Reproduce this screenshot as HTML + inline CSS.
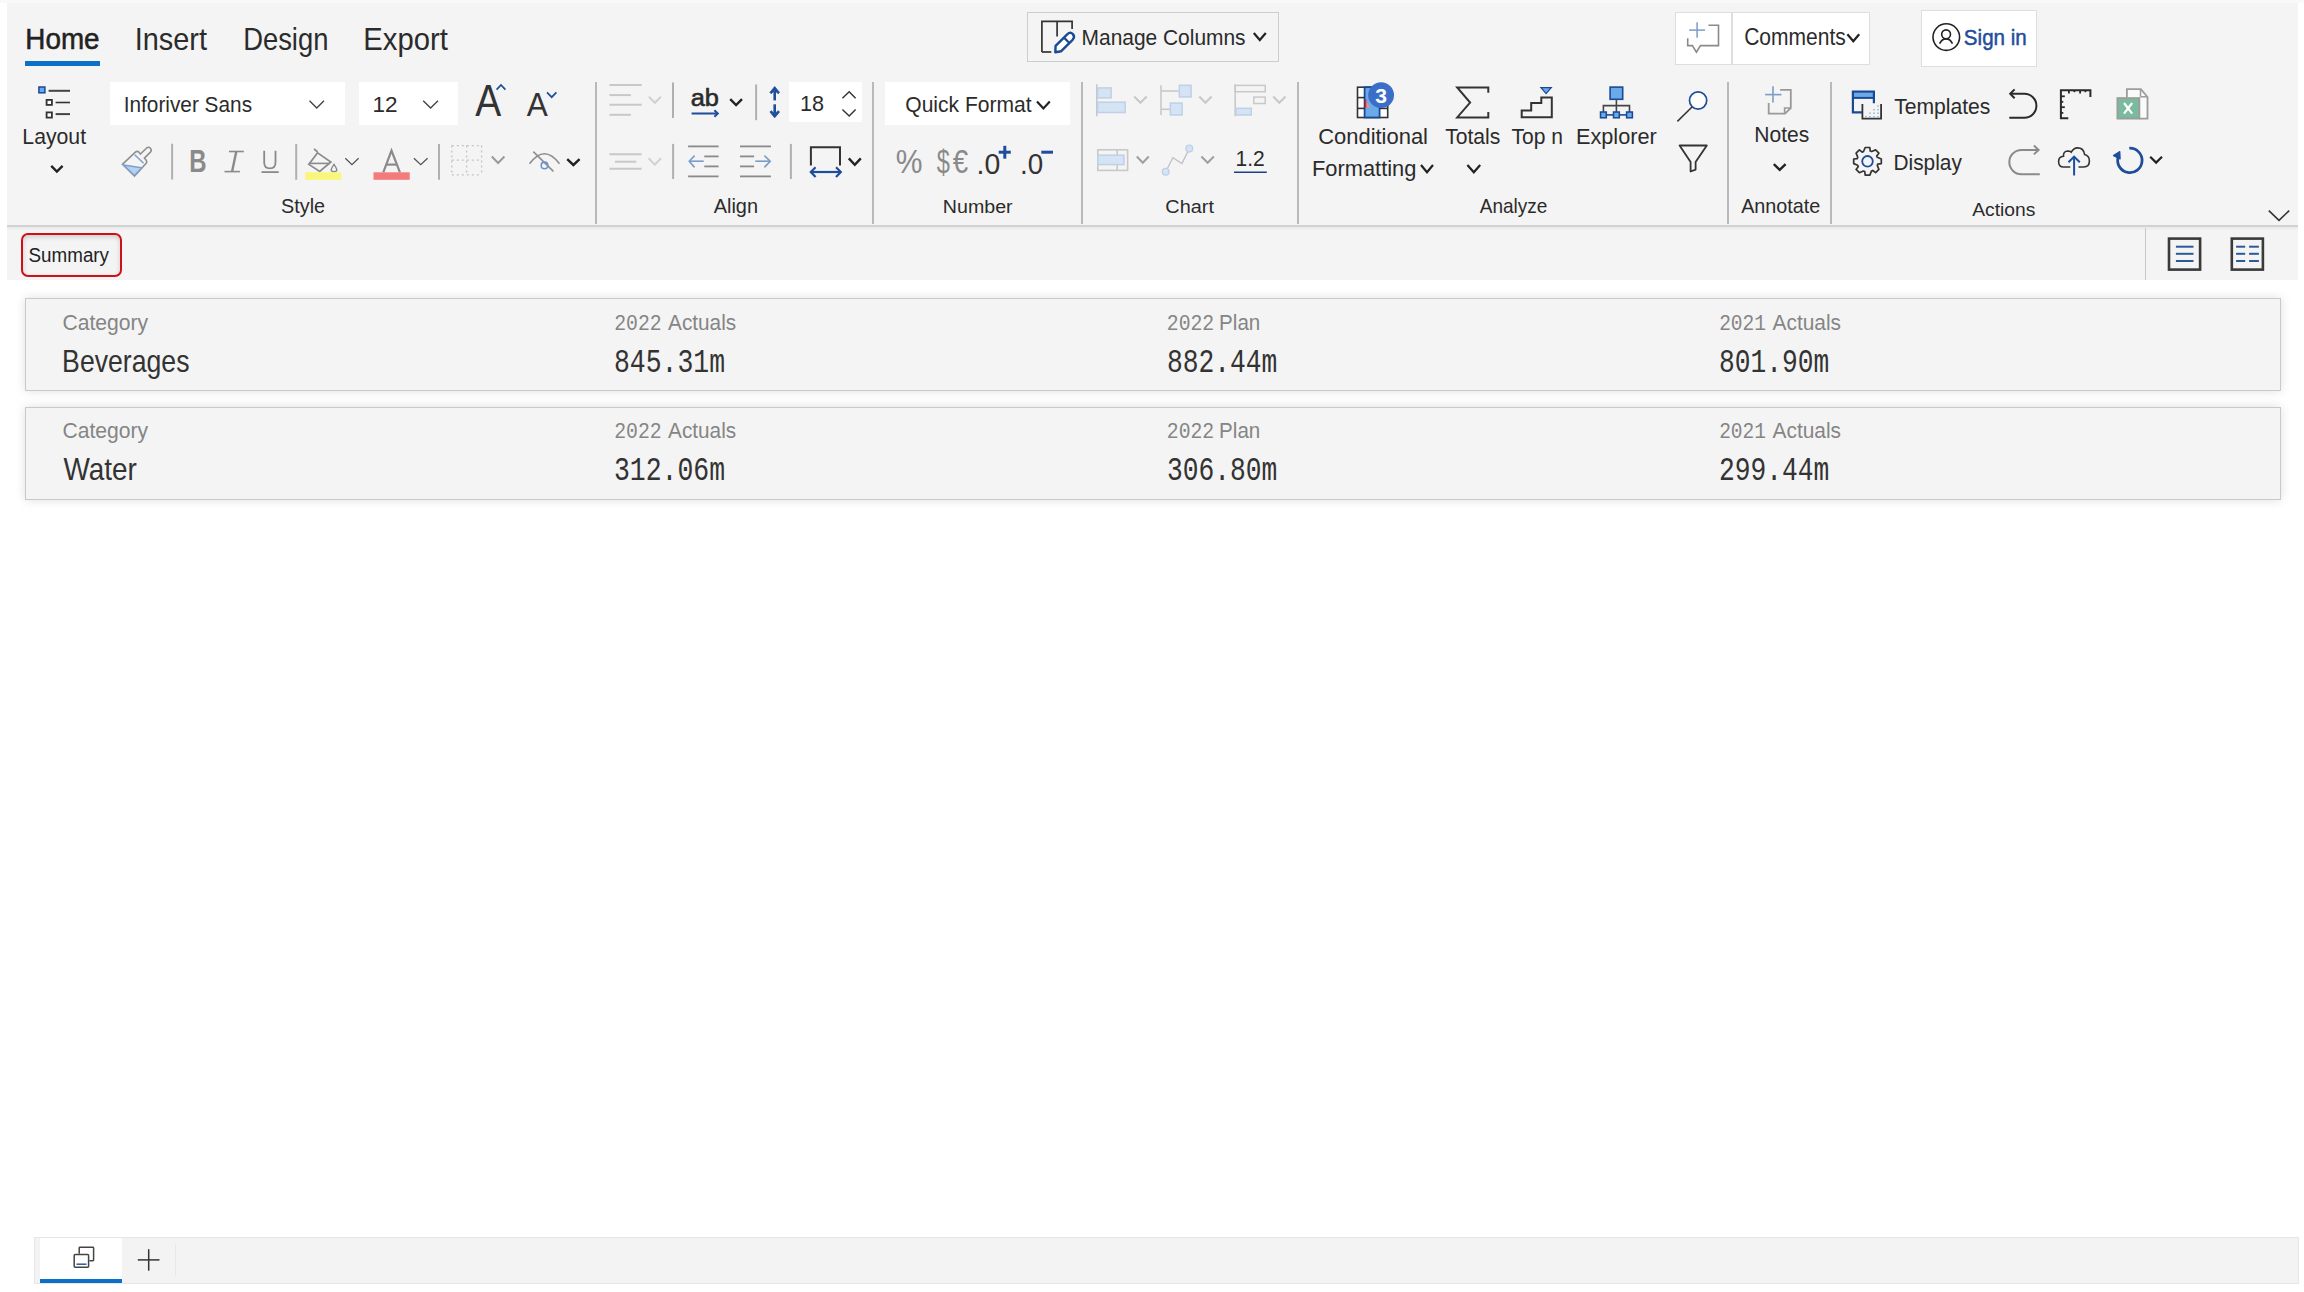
<!DOCTYPE html>
<html><head><meta charset="utf-8"><title>Inforiver</title>
<style>
html,body{margin:0;padding:0;width:2304px;height:1292px;overflow:hidden;background:#fff;font-family:"Liberation Sans",sans-serif}
.a{position:absolute}
svg{position:absolute;left:0;top:0}
</style></head><body>
<div class="a" style="left:0px;top:0px;width:2304px;height:3px;background:#f9f9f9"></div>
<div class="a" style="left:7px;top:3px;width:2291px;height:223px;background:#f4f4f4"></div>
<div class="a" style="left:7px;top:225px;width:2291px;height:2px;background:#d2d2d2"></div>
<div class="a" style="left:7px;top:227px;width:2291px;height:53px;background:#f4f4f4"></div>
<div class="a" style="left:7px;top:227px;width:2291px;height:4px;background:linear-gradient(#e9e9e9,#f4f4f4)"></div>
<div class="a" style="left:110px;top:82px;width:235px;height:43px;background:#fff"></div>
<div class="a" style="left:359px;top:82px;width:99px;height:43px;background:#fff"></div>
<div class="a" style="left:789px;top:82px;width:73px;height:40px;background:#fff"></div>
<div class="a" style="left:885px;top:82px;width:185px;height:43px;background:#fff"></div>
<div class="a" style="left:1027px;top:12px;width:252px;height:50px;box-sizing:border-box;border:1.5px solid #cdcdcd"></div>
<div class="a" style="left:1675px;top:12px;width:195px;height:53px;box-sizing:border-box;border:1.5px solid #dedede;background:#fff"></div>
<div class="a" style="left:1731px;top:13px;width:1.5px;height:51px;background:#dedede"></div>
<div class="a" style="left:1921px;top:10px;width:116px;height:57px;box-sizing:border-box;border:1.5px solid #dedede;background:#fff"></div>
<div class="a" style="left:595px;top:82px;width:2px;height:142px;background:#b9b9b9"></div>
<div class="a" style="left:872px;top:82px;width:2px;height:142px;background:#b9b9b9"></div>
<div class="a" style="left:1081px;top:82px;width:2px;height:142px;background:#b9b9b9"></div>
<div class="a" style="left:1297px;top:82px;width:2px;height:142px;background:#b9b9b9"></div>
<div class="a" style="left:1727px;top:82px;width:2px;height:142px;background:#b9b9b9"></div>
<div class="a" style="left:1830px;top:82px;width:2px;height:142px;background:#b9b9b9"></div>
<div class="a" style="left:21px;top:233px;width:101px;height:44px;box-sizing:border-box;border:2.8px solid #cc1119;border-radius:7px;box-shadow:inset 0 2px 5px rgba(0,0,0,.16)"></div>
<div class="a" style="left:2145px;top:228px;width:1px;height:52px;background:#c8c8c8"></div>
<div class="a" style="left:25px;top:298px;width:2256px;height:93px;box-sizing:border-box;border:1px solid #c9c9c9;background:#f4f4f4;box-shadow:0 0 10px rgba(0,0,0,.13)"></div>
<div class="a" style="left:25px;top:407px;width:2256px;height:93px;box-sizing:border-box;border:1px solid #c9c9c9;background:#f4f4f4;box-shadow:0 0 10px rgba(0,0,0,.13)"></div>
<div class="a" style="left:34px;top:1237px;width:2265px;height:47px;box-sizing:border-box;border:1.5px solid #e6e6e6;background:#f3f3f3"></div>
<div class="a" style="left:40px;top:1238px;width:82px;height:45px;background:#fff"></div>
<div class="a" style="left:40px;top:1279px;width:82px;height:4px;background:#0a70c8"></div>
<div class="a" style="left:175px;top:1244px;width:1px;height:32px;background:#e8e8e8"></div>
<div class="a" style="left:25px;top:60.5px;width:75px;height:5.0px;background:#0a70c8"></div>
<svg width="2304" height="1292" viewBox="0 0 2304 1292">
<g id="icons">
<rect x="38.90" y="87.00" width="6.00" height="5.80" rx="0" fill="#6aaae8" stroke="#1a4a94" stroke-width="1.5"/>
<line x1="48.60" y1="90.80" x2="70.00" y2="90.80" stroke="#444" stroke-width="2" stroke-linecap="butt"/>
<rect x="46.60" y="99.90" width="5.30" height="5.00" rx="0" fill="#fff" stroke="#333" stroke-width="1.8"/>
<line x1="55.60" y1="102.50" x2="70.00" y2="102.50" stroke="#333" stroke-width="1.6" stroke-linecap="butt"/>
<rect x="46.60" y="112.40" width="5.30" height="5.20" rx="0" fill="#fff" stroke="#333" stroke-width="1.8"/>
<line x1="55.60" y1="114.10" x2="70.00" y2="114.10" stroke="#444" stroke-width="2" stroke-linecap="butt"/>
<polyline points="51.20,165.80 56.90,171.60 62.60,165.80" fill="none" stroke="#222" stroke-width="2.4" stroke-linecap="butt" stroke-linejoin="miter" />
<polyline points="309.50,100.80 316.75,108.00 324.00,100.80" fill="none" stroke="#444" stroke-width="1.4" stroke-linecap="butt" stroke-linejoin="miter" />
<polyline points="423.20,100.80 430.60,108.00 438.00,100.80" fill="none" stroke="#444" stroke-width="1.4" stroke-linecap="butt" stroke-linejoin="miter" />
<polyline points="496.60,89.60 501.00,85.00 505.40,89.60" fill="none" stroke="#1e4d9c" stroke-width="1.7" stroke-linecap="butt" stroke-linejoin="miter" />
<polyline points="547.00,92.30 551.70,97.20 556.40,92.30" fill="none" stroke="#1e4d9c" stroke-width="1.7" stroke-linecap="butt" stroke-linejoin="miter" />
<path d="M122.6,164.2 L135.4,152.2 Q137.2,150.6 139.0,152.2 L140.4,154.1 L146.6,148.0 Q148.9,146.4 150.6,148.4 Q152.0,150.3 150.4,152.1 L144.4,158.1 L146.2,160.2 Q147.3,161.8 146.2,163.2 L134.5,176.0 Z" fill="#f4f4f4" stroke="#8f8f8f" stroke-width="1.6" />
<path d="M123.4,165.0 L141.8,167.8 L134.5,175.6 Z" fill="#b3d2f2" stroke="#7f9fc8" stroke-width="1.4" />
<line x1="134.70" y1="154.80" x2="143.60" y2="163.30" stroke="#7f9fc8" stroke-width="1.5" stroke-linecap="butt"/>
<line x1="172.10" y1="143.70" x2="172.10" y2="179.50" stroke="#b0b0b0" stroke-width="2" stroke-linecap="butt"/>
<line x1="296.20" y1="143.90" x2="296.20" y2="179.80" stroke="#b0b0b0" stroke-width="2" stroke-linecap="butt"/>
<line x1="439.00" y1="143.90" x2="439.00" y2="179.80" stroke="#b0b0b0" stroke-width="2" stroke-linecap="butt"/>
<line x1="673.10" y1="143.90" x2="673.10" y2="179.00" stroke="#b0b0b0" stroke-width="2" stroke-linecap="butt"/>
<line x1="790.90" y1="143.90" x2="790.90" y2="179.00" stroke="#b0b0b0" stroke-width="2" stroke-linecap="butt"/>
<line x1="673.00" y1="82.60" x2="673.00" y2="118.00" stroke="#b0b0b0" stroke-width="2" stroke-linecap="butt"/>
<line x1="756.10" y1="84.50" x2="756.10" y2="120.20" stroke="#b0b0b0" stroke-width="2" stroke-linecap="butt"/>
<line x1="229.00" y1="151.50" x2="243.80" y2="151.50" stroke="#8a8a8a" stroke-width="1.6" stroke-linecap="butt"/>
<line x1="224.50" y1="171.60" x2="239.90" y2="171.60" stroke="#8a8a8a" stroke-width="1.6" stroke-linecap="butt"/>
<line x1="236.30" y1="151.50" x2="232.10" y2="171.60" stroke="#8a8a8a" stroke-width="2.4" stroke-linecap="butt"/>
<path d="M264.2,150.7 V162.5 Q264.2,168.4 269.85,168.4 Q275.5,168.4 275.5,162.5 V150.7" fill="none" stroke="#8a8a8a" stroke-width="1.8" />
<line x1="261.50" y1="172.10" x2="278.70" y2="172.10" stroke="#8a8a8a" stroke-width="1.8" stroke-linecap="butt"/>
<path d="M317.6,152.8 L308.8,164.4 L319.7,171.4 L330.9,162.0 Z" fill="none" stroke="#8a8a8a" stroke-width="1.7" />
<line x1="314.00" y1="148.80" x2="317.60" y2="152.00" stroke="#8a8a8a" stroke-width="1.7" stroke-linecap="butt"/>
<line x1="309.00" y1="163.40" x2="329.50" y2="163.40" stroke="#8a8a8a" stroke-width="1.6" stroke-linecap="butt"/>
<path d="M334.0,164.3 Q331.2,168.5 331.2,169.8 Q331.2,171.8 334.0,171.8 Q336.8,171.8 336.8,169.8 Q336.8,168.5 334.0,164.3 Z" fill="none" stroke="#8a8a8a" stroke-width="1.4" />
<rect x="305.20" y="172.30" width="36.10" height="7.50" rx="0" fill="#f8f77a" stroke="none" stroke-width="0"/>
<polyline points="345.30,158.20 351.95,164.60 358.60,158.20" fill="none" stroke="#555" stroke-width="1.3" stroke-linecap="butt" stroke-linejoin="miter" />
<polyline points="383.30,172.30 391.50,150.60 399.90,172.30" fill="none" stroke="#8a8a8a" stroke-width="2.2" stroke-linecap="butt" stroke-linejoin="miter" />
<line x1="386.20" y1="164.60" x2="396.80" y2="164.60" stroke="#8a8a8a" stroke-width="2.2" stroke-linecap="butt"/>
<rect x="373.50" y="172.30" width="36.20" height="7.50" rx="0" fill="#f47b7b" stroke="none" stroke-width="0"/>
<polyline points="413.90,158.20 420.75,164.60 427.60,158.20" fill="none" stroke="#555" stroke-width="1.3" stroke-linecap="butt" stroke-linejoin="miter" />
<line x1="451.8" y1="145.6" x2="481.6" y2="145.6" stroke="#c4c4c4" stroke-width="1.3" stroke-dasharray="2,3"/>
<line x1="451.8" y1="174.8" x2="481.6" y2="174.8" stroke="#c4c4c4" stroke-width="1.3" stroke-dasharray="2,3"/>
<line x1="451.8" y1="145.6" x2="451.8" y2="174.8" stroke="#c4c4c4" stroke-width="1.3" stroke-dasharray="2,3"/>
<line x1="481.6" y1="145.6" x2="481.6" y2="174.8" stroke="#c4c4c4" stroke-width="1.3" stroke-dasharray="2,3"/>
<line x1="466.6" y1="145.6" x2="466.6" y2="174.8" stroke="#c4c4c4" stroke-width="1.3" stroke-dasharray="2,3"/>
<line x1="451.8" y1="160.2" x2="481.6" y2="160.2" stroke="#c4c4c4" stroke-width="1.3" stroke-dasharray="2,3"/>
<polyline points="491.80,156.50 498.10,163.00 504.40,156.50" fill="none" stroke="#9a9a9a" stroke-width="2.0" stroke-linecap="butt" stroke-linejoin="miter" />
<path d="M529.5,163.8 Q544.5,143.6 559.5,163.8" fill="none" stroke="#8e8e8e" stroke-width="1.6" />
<line x1="533.30" y1="151.60" x2="553.40" y2="171.40" stroke="#8e8e8e" stroke-width="1.6" stroke-linecap="butt"/>
<circle cx="544.5" cy="165.4" r="3.3" fill="none" stroke="#6d95cc" stroke-width="1.6"/>
<polyline points="567.20,159.20 573.40,165.00 579.60,159.20" fill="none" stroke="#222" stroke-width="2.4" stroke-linecap="butt" stroke-linejoin="miter" />
<line x1="609.40" y1="85.00" x2="641.70" y2="85.00" stroke="#c8c8c8" stroke-width="2" stroke-linecap="butt"/>
<line x1="609.40" y1="95.10" x2="630.90" y2="95.10" stroke="#c8c8c8" stroke-width="2" stroke-linecap="butt"/>
<line x1="609.40" y1="104.80" x2="641.70" y2="104.80" stroke="#c8c8c8" stroke-width="2" stroke-linecap="butt"/>
<line x1="609.40" y1="114.80" x2="630.90" y2="114.80" stroke="#c8c8c8" stroke-width="2" stroke-linecap="butt"/>
<polyline points="648.80,96.60 654.90,102.80 661.00,96.60" fill="none" stroke="#d0d0d0" stroke-width="2" stroke-linecap="butt" stroke-linejoin="miter" />
<line x1="691.60" y1="113.50" x2="716.50" y2="113.50" stroke="#1e4d9c" stroke-width="2" stroke-linecap="butt"/>
<polyline points="714.40,110.20 717.80,113.50 714.40,116.80" fill="none" stroke="#1e4d9c" stroke-width="2" stroke-linecap="butt" stroke-linejoin="miter" />
<polyline points="730.20,99.20 736.10,105.00 742.00,99.20" fill="none" stroke="#222" stroke-width="2.4" stroke-linecap="butt" stroke-linejoin="miter" />
<line x1="774.70" y1="91.00" x2="774.70" y2="100.40" stroke="#1e4d9c" stroke-width="2.6" stroke-linecap="butt"/>
<line x1="774.70" y1="104.30" x2="774.70" y2="113.50" stroke="#1e4d9c" stroke-width="2.6" stroke-linecap="butt"/>
<path d="M769.9,92.4 L774.7,86.6 L779.5,92.4 L778.2,93.7 L774.7,90.6 L771.2,93.7 Z" fill="#1e4d9c" stroke="#1e4d9c" stroke-width="0.8" />
<path d="M769.9,112.0 L774.7,117.8 L779.5,112.0 L778.2,110.7 L774.7,113.8 L771.2,110.7 Z" fill="#1e4d9c" stroke="#1e4d9c" stroke-width="0.8" />
<polyline points="842.40,98.20 849.20,91.70 855.60,98.20" fill="none" stroke="#333" stroke-width="1.4" stroke-linecap="butt" stroke-linejoin="miter" />
<polyline points="842.40,109.60 849.20,116.10 855.60,109.60" fill="none" stroke="#333" stroke-width="1.4" stroke-linecap="butt" stroke-linejoin="miter" />
<line x1="609.40" y1="154.20" x2="641.60" y2="154.20" stroke="#c8c8c8" stroke-width="2" stroke-linecap="butt"/>
<line x1="615.00" y1="161.70" x2="636.30" y2="161.70" stroke="#c8c8c8" stroke-width="2" stroke-linecap="butt"/>
<line x1="609.40" y1="168.70" x2="641.60" y2="168.70" stroke="#c8c8c8" stroke-width="2" stroke-linecap="butt"/>
<polyline points="648.60,158.30 654.80,164.60 661.00,158.30" fill="none" stroke="#d0d0d0" stroke-width="2" stroke-linecap="butt" stroke-linejoin="miter" />
<line x1="688.10" y1="146.40" x2="718.60" y2="146.40" stroke="#8a8a8a" stroke-width="1.8" stroke-linecap="butt"/>
<line x1="740.00" y1="146.40" x2="770.90" y2="146.40" stroke="#8a8a8a" stroke-width="1.8" stroke-linecap="butt"/>
<line x1="688.10" y1="176.40" x2="718.60" y2="176.40" stroke="#8a8a8a" stroke-width="1.8" stroke-linecap="butt"/>
<line x1="740.00" y1="176.40" x2="770.90" y2="176.40" stroke="#8a8a8a" stroke-width="1.8" stroke-linecap="butt"/>
<line x1="704.30" y1="156.40" x2="718.60" y2="156.40" stroke="#8a8a8a" stroke-width="1.8" stroke-linecap="butt"/>
<line x1="740.00" y1="156.40" x2="754.10" y2="156.40" stroke="#8a8a8a" stroke-width="1.8" stroke-linecap="butt"/>
<line x1="704.30" y1="166.40" x2="718.60" y2="166.40" stroke="#8a8a8a" stroke-width="1.8" stroke-linecap="butt"/>
<line x1="740.00" y1="166.40" x2="754.10" y2="166.40" stroke="#8a8a8a" stroke-width="1.8" stroke-linecap="butt"/>
<line x1="689.50" y1="161.20" x2="703.70" y2="161.20" stroke="#7a9ccb" stroke-width="1.6" stroke-linecap="butt"/>
<polyline points="694.60,155.60 689.20,161.20 694.60,167.40" fill="none" stroke="#7a9ccb" stroke-width="1.6" stroke-linecap="butt" stroke-linejoin="miter" />
<line x1="755.30" y1="161.20" x2="770.00" y2="161.20" stroke="#7a9ccb" stroke-width="1.6" stroke-linecap="butt"/>
<polyline points="764.40,155.60 770.20,161.20 764.40,167.40" fill="none" stroke="#7a9ccb" stroke-width="1.6" stroke-linecap="butt" stroke-linejoin="miter" />
<polyline points="810.90,165.50 810.90,147.20 840.00,147.20 840.00,165.50" fill="none" stroke="#333" stroke-width="2" stroke-linecap="butt" stroke-linejoin="miter" />
<line x1="811.50" y1="172.00" x2="840.30" y2="172.00" stroke="#1e4d9c" stroke-width="2.2" stroke-linecap="butt"/>
<polyline points="815.60,167.30 810.80,172.00 815.60,176.90" fill="none" stroke="#1e4d9c" stroke-width="2.2" stroke-linecap="butt" stroke-linejoin="miter" />
<polyline points="836.00,167.30 840.80,172.00 836.00,176.90" fill="none" stroke="#1e4d9c" stroke-width="2.2" stroke-linecap="butt" stroke-linejoin="miter" />
<polyline points="848.80,158.40 854.80,164.80 860.80,158.40" fill="none" stroke="#222" stroke-width="2.4" stroke-linecap="butt" stroke-linejoin="miter" />
<line x1="998.70" y1="152.20" x2="1010.80" y2="152.20" stroke="#1e4d9c" stroke-width="3" stroke-linecap="butt"/>
<line x1="1004.80" y1="145.80" x2="1004.80" y2="158.70" stroke="#1e4d9c" stroke-width="3" stroke-linecap="butt"/>
<line x1="1041.30" y1="152.20" x2="1053.00" y2="152.20" stroke="#1e4d9c" stroke-width="3" stroke-linecap="butt"/>
<line x1="1096.80" y1="84.30" x2="1096.80" y2="116.20" stroke="#c8c8c8" stroke-width="1.6" stroke-linecap="butt"/>
<rect x="1097.60" y="87.90" width="13.50" height="10.00" rx="0" fill="#d4e4f4" stroke="#bfd0e6" stroke-width="1.5"/>
<rect x="1097.60" y="102.20" width="27.60" height="10.30" rx="0" fill="#d4e4f4" stroke="#bfd0e6" stroke-width="1.5"/>
<polyline points="1134.20,96.50 1140.45,102.80 1146.70,96.50" fill="none" stroke="#c8c8c8" stroke-width="2" stroke-linecap="butt" stroke-linejoin="miter" />
<line x1="1161.00" y1="85.20" x2="1161.00" y2="115.00" stroke="#c8c8c8" stroke-width="1.6" stroke-linecap="butt"/>
<line x1="1161.00" y1="91.00" x2="1178.60" y2="91.00" stroke="#c8c8c8" stroke-width="1.6" stroke-linecap="butt"/>
<line x1="1161.00" y1="109.30" x2="1169.60" y2="109.30" stroke="#c8c8c8" stroke-width="1.6" stroke-linecap="butt"/>
<rect x="1179.30" y="85.30" width="11.80" height="11.60" rx="0" fill="#d4e4f4" stroke="#bfd0e6" stroke-width="1.5"/>
<rect x="1170.30" y="103.10" width="11.80" height="11.90" rx="0" fill="#d4e4f4" stroke="#bfd0e6" stroke-width="1.5"/>
<polyline points="1199.30,96.50 1205.45,102.80 1211.60,96.50" fill="none" stroke="#c8c8c8" stroke-width="2" stroke-linecap="butt" stroke-linejoin="miter" />
<line x1="1235.20" y1="84.30" x2="1235.20" y2="116.20" stroke="#c8c8c8" stroke-width="1.6" stroke-linecap="butt"/>
<rect x="1235.20" y="85.40" width="30.00" height="6.30" rx="0" fill="none" stroke="#c8c8c8" stroke-width="1.5"/>
<rect x="1253.80" y="97.10" width="11.40" height="6.40" rx="0" fill="none" stroke="#c8c8c8" stroke-width="1.5"/>
<rect x="1235.90" y="108.30" width="15.40" height="6.70" rx="0" fill="#d4e4f4" stroke="#bfd0e6" stroke-width="1.5"/>
<polyline points="1273.20,96.50 1279.35,102.80 1285.50,96.50" fill="none" stroke="#c8c8c8" stroke-width="2" stroke-linecap="butt" stroke-linejoin="miter" />
<rect x="1097.80" y="149.80" width="29.80" height="20.60" rx="0" fill="none" stroke="#c8c8c8" stroke-width="1.6"/>
<line x1="1117.20" y1="149.80" x2="1117.20" y2="170.40" stroke="#c8c8c8" stroke-width="1.6" stroke-linecap="butt"/>
<rect x="1097.80" y="155.20" width="26.20" height="9.40" rx="0" fill="#d4e4f4" stroke="#bfd0e6" stroke-width="1.5"/>
<polyline points="1136.80,156.50 1142.80,162.80 1148.80,156.50" fill="none" stroke="#a0a0a0" stroke-width="2" stroke-linecap="butt" stroke-linejoin="miter" />
<polyline points="1165.70,171.70 1172.90,157.60 1181.90,163.60 1189.30,148.60" fill="none" stroke="#c0c0c0" stroke-width="1.3" stroke-linecap="butt" stroke-linejoin="miter" />
<circle cx="1165.7" cy="171.7" r="3.4" fill="#d4e4f4" stroke="#bfd0e6" stroke-width="1.3"/>
<circle cx="1189.3" cy="148.6" r="3.4" fill="#d4e4f4" stroke="#bfd0e6" stroke-width="1.3"/>
<polyline points="1201.40,156.50 1207.65,162.80 1213.90,156.50" fill="none" stroke="#a0a0a0" stroke-width="2" stroke-linecap="butt" stroke-linejoin="miter" />
<line x1="1234.00" y1="172.30" x2="1266.80" y2="172.30" stroke="#1e3f80" stroke-width="1.6" stroke-linecap="butt"/>
<rect x="1357.50" y="87.20" width="30.20" height="30.30" rx="0" fill="#fff" stroke="#333" stroke-width="1.6"/>
<rect x="1364.60" y="87.20" width="15.00" height="30.30" rx="0" fill="#6aaae8" stroke="#1a4a94" stroke-width="1.8"/>
<line x1="1357.50" y1="97.60" x2="1364.60" y2="97.60" stroke="#333" stroke-width="1.6" stroke-linecap="butt"/>
<line x1="1379.60" y1="97.60" x2="1387.70" y2="97.60" stroke="#333" stroke-width="1.6" stroke-linecap="butt"/>
<line x1="1357.50" y1="108.40" x2="1364.60" y2="108.40" stroke="#333" stroke-width="1.6" stroke-linecap="butt"/>
<line x1="1379.60" y1="108.40" x2="1387.70" y2="108.40" stroke="#333" stroke-width="1.6" stroke-linecap="butt"/>
<path d="M1365.4,100.0 L1365.4,107.6 L1370.5,107.6 Z" fill="#f58a8a" stroke="none" stroke-width="0" />
<line x1="1365.60" y1="99.50" x2="1365.60" y2="107.60" stroke="#e02020" stroke-width="1.4" stroke-linecap="butt"/>
<circle cx="1381.1" cy="95.2" r="12.9" fill="#3b6ec8"/>
<path d="M1488.3,92.8 V87.4 H1457.2 L1470.1,102.6 L1457.2,117.4 H1488.3 V111.9" fill="none" stroke="#333" stroke-width="2" />
<path d="M1521.7,117.3 V110.5 H1531.2 V103.0 H1541.3 V97.6 H1551.8 V117.3 Z" fill="none" stroke="#333" stroke-width="2" />
<path d="M1541.0,87.6 H1551.2 L1546.1,93.6 Z" fill="#6aaae8" stroke="#1a4a94" stroke-width="1.3" />
<rect x="1610.10" y="87.10" width="12.60" height="12.20" rx="0" fill="#6aaae8" stroke="#1a4a94" stroke-width="1.6"/>
<line x1="1616.40" y1="100.10" x2="1616.40" y2="111.90" stroke="#444" stroke-width="1.6" stroke-linecap="butt"/>
<polyline points="1603.40,111.90 1603.40,105.60 1629.50,105.60 1629.50,111.90" fill="none" stroke="#444" stroke-width="1.6" stroke-linecap="butt" stroke-linejoin="miter" />
<line x1="1603.40" y1="114.90" x2="1629.50" y2="114.90" stroke="#1a4a94" stroke-width="1.6" stroke-linecap="butt"/>
<rect x="1600.50" y="112.00" width="5.80" height="5.80" rx="0" fill="#6aaae8" stroke="#1a4a94" stroke-width="1.5"/>
<rect x="1613.50" y="112.00" width="5.80" height="5.80" rx="0" fill="#6aaae8" stroke="#1a4a94" stroke-width="1.5"/>
<rect x="1626.60" y="112.00" width="5.80" height="5.80" rx="0" fill="#6aaae8" stroke="#1a4a94" stroke-width="1.5"/>
<circle cx="1698.1" cy="100.5" r="8.6" fill="#fff" stroke="#1e4d9c" stroke-width="1.7"/>
<line x1="1692.00" y1="107.00" x2="1677.40" y2="121.40" stroke="#333" stroke-width="1.5" stroke-linecap="butt"/>
<path d="M1679.6,145.5 H1706.8 L1695.6,162.1 V169.6 L1690.6,171.5 V162.1 Z" fill="none" stroke="#333" stroke-width="1.8" stroke-linejoin="round"/>
<polyline points="1421.00,165.00 1427.00,172.30 1433.00,165.00" fill="none" stroke="#222" stroke-width="2.2" stroke-linecap="butt" stroke-linejoin="miter" />
<polyline points="1467.40,165.00 1473.80,172.30 1480.20,165.00" fill="none" stroke="#222" stroke-width="2.2" stroke-linecap="butt" stroke-linejoin="miter" />
<polyline points="1773.80,164.20 1779.70,169.80 1785.60,164.20" fill="none" stroke="#222" stroke-width="2.4" stroke-linecap="butt" stroke-linejoin="miter" />
<line x1="1765.10" y1="94.60" x2="1781.50" y2="94.60" stroke="#7b9cc8" stroke-width="1.6" stroke-linecap="butt"/>
<line x1="1773.00" y1="86.30" x2="1773.00" y2="102.50" stroke="#7b9cc8" stroke-width="1.6" stroke-linecap="butt"/>
<polyline points="1780.10,89.80 1790.80,89.80 1790.80,108.00 1785.00,113.70 1768.70,113.70 1768.70,102.90" fill="none" stroke="#999" stroke-width="1.8" stroke-linecap="butt" stroke-linejoin="miter" />
<polyline points="1790.80,108.00 1784.60,108.00 1784.60,113.70" fill="none" stroke="#999" stroke-width="1.6" stroke-linecap="butt" stroke-linejoin="miter" />
<rect x="1853.60" y="92.40" width="19.60" height="5.00" rx="0" fill="#6aaae8" stroke="none" stroke-width="0"/>
<path d="M1873.9,103.2 V91.6 H1852.9 V112.3 H1862" fill="none" stroke="#1a4a94" stroke-width="2.2" />
<line x1="1852.90" y1="97.90" x2="1873.90" y2="97.90" stroke="#1a4a94" stroke-width="2.0" stroke-linecap="butt"/>
<polyline points="1862.40,104.00 1862.40,118.60 1881.10,118.60 1881.10,104.00" fill="none" stroke="#333" stroke-width="1.8" stroke-linecap="butt" stroke-linejoin="miter" />
<rect x="1877.30" y="105.30" width="1.40" height="1.40" rx="0" fill="#8aa8d0" stroke="none" stroke-width="0"/>
<rect x="1873.30" y="109.00" width="1.40" height="1.40" rx="0" fill="#8aa8d0" stroke="none" stroke-width="0"/>
<rect x="1877.30" y="109.00" width="1.40" height="1.40" rx="0" fill="#8aa8d0" stroke="none" stroke-width="0"/>
<rect x="1869.20" y="112.50" width="1.40" height="1.40" rx="0" fill="#8aa8d0" stroke="none" stroke-width="0"/>
<rect x="1873.30" y="112.50" width="1.40" height="1.40" rx="0" fill="#8aa8d0" stroke="none" stroke-width="0"/>
<rect x="1877.30" y="112.50" width="1.40" height="1.40" rx="0" fill="#8aa8d0" stroke="none" stroke-width="0"/>
<rect x="1865.20" y="116.00" width="1.40" height="1.40" rx="0" fill="#8aa8d0" stroke="none" stroke-width="0"/>
<rect x="1869.20" y="116.00" width="1.40" height="1.40" rx="0" fill="#8aa8d0" stroke="none" stroke-width="0"/>
<rect x="1873.30" y="116.00" width="1.40" height="1.40" rx="0" fill="#8aa8d0" stroke="none" stroke-width="0"/>
<rect x="1877.30" y="116.00" width="1.40" height="1.40" rx="0" fill="#8aa8d0" stroke="none" stroke-width="0"/>
<path d="M1863.53,151.47 L1865.19,147.49 L1869.81,147.49 L1870.24,151.06 L1871.64,151.54 L1875.63,149.90 L1878.90,153.17 L1876.68,156.00 L1877.33,157.33 L1881.31,158.99 L1881.31,163.61 L1877.74,164.04 L1877.26,165.44 L1878.90,169.43 L1875.63,172.70 L1872.80,170.48 L1871.47,171.13 L1869.81,175.11 L1865.19,175.11 L1864.76,171.54 L1863.36,171.06 L1859.37,172.70 L1856.10,169.43 L1858.32,166.60 L1857.67,165.27 L1853.69,163.61 L1853.69,158.99 L1857.26,158.56 L1857.74,157.16 L1856.10,153.17 L1859.37,149.90 L1862.20,152.12 Z" fill="none" stroke="#333" stroke-width="1.7" stroke-linejoin="round"/>
<circle cx="1867.5" cy="161.3" r="5.3" fill="none" stroke="#1e4d9c" stroke-width="1.8"/>
<path d="M2010.5,93.8 H2024.4 A12,12 0 0 1 2024.4,117.8 H2009.3" fill="none" stroke="#2a2a2a" stroke-width="2" />
<polyline points="2014.60,89.40 2010.20,93.80 2014.60,98.30" fill="none" stroke="#2a2a2a" stroke-width="2" stroke-linecap="butt" stroke-linejoin="miter" />
<polyline points="2068.30,118.20 2060.90,118.20 2060.90,90.30 2090.40,90.30 2090.40,97.10" fill="none" stroke="#2a2a2a" stroke-width="2" stroke-linecap="butt" stroke-linejoin="miter" />
<line x1="2068.90" y1="90.30" x2="2068.90" y2="93.60" stroke="#2a2a2a" stroke-width="1.8" stroke-linecap="butt"/>
<line x1="2074.40" y1="90.30" x2="2074.40" y2="92.20" stroke="#2a2a2a" stroke-width="1.8" stroke-linecap="butt"/>
<line x1="2080.10" y1="90.30" x2="2080.10" y2="93.60" stroke="#2a2a2a" stroke-width="1.8" stroke-linecap="butt"/>
<line x1="2085.40" y1="90.30" x2="2085.40" y2="92.20" stroke="#2a2a2a" stroke-width="1.8" stroke-linecap="butt"/>
<line x1="2060.90" y1="96.30" x2="2064.80" y2="96.30" stroke="#2a2a2a" stroke-width="1.8" stroke-linecap="butt"/>
<line x1="2060.90" y1="101.80" x2="2063.30" y2="101.80" stroke="#2a2a2a" stroke-width="1.8" stroke-linecap="butt"/>
<line x1="2060.90" y1="107.20" x2="2064.80" y2="107.20" stroke="#2a2a2a" stroke-width="1.8" stroke-linecap="butt"/>
<line x1="2060.90" y1="112.90" x2="2063.30" y2="112.90" stroke="#2a2a2a" stroke-width="1.8" stroke-linecap="butt"/>
<path d="M2126.9,97.5 V89.2 H2140.8 L2147.5,97.0 V118.6 H2139.5" fill="#fafafa" stroke="#9c9c9c" stroke-width="1.8" />
<line x1="2139.30" y1="97.50" x2="2139.30" y2="118.60" stroke="#9c9c9c" stroke-width="1.6" stroke-linecap="butt"/>
<line x1="2140.50" y1="89.20" x2="2140.50" y2="96.80" stroke="#9c9c9c" stroke-width="1.5" stroke-linecap="butt"/>
<line x1="2140.50" y1="96.80" x2="2147.50" y2="96.80" stroke="#9c9c9c" stroke-width="1.5" stroke-linecap="butt"/>
<rect x="2117.40" y="98.10" width="21.90" height="20.50" rx="0" fill="#7aba9e" stroke="#9c9c9c" stroke-width="1.8"/>
<polyline points="2124.00,103.00 2132.20,113.60" fill="none" stroke="#fff" stroke-width="2.2" stroke-linecap="butt" stroke-linejoin="miter" />
<polyline points="2132.20,103.00 2124.00,113.60" fill="none" stroke="#fff" stroke-width="2.2" stroke-linecap="butt" stroke-linejoin="miter" />
<path d="M2038.5,149.9 H2021.5 A12.2,12.2 0 0 0 2021.5,174.3 H2039.8" fill="none" stroke="#8a8a8a" stroke-width="2" />
<polyline points="2033.90,145.60 2038.60,149.90 2033.90,154.40" fill="none" stroke="#8a8a8a" stroke-width="2" stroke-linecap="butt" stroke-linejoin="miter" />
<path d="M2070.3,167.0 H2063.5 Q2058.6,167.0 2058.6,161.5 Q2058.6,156.5 2063.5,156.2 Q2063.0,151.2 2067.8,151.0 Q2070.0,151.0 2071.2,152.2 Q2073.6,147.9 2077.5,147.9 Q2083.6,147.9 2084.6,154.5 Q2089.4,155.6 2089.4,161.0 Q2089.4,167.0 2083.8,167.0 H2078.5" fill="none" stroke="#333" stroke-width="1.6" />
<line x1="2074.10" y1="157.00" x2="2074.10" y2="175.50" stroke="#1e4d9c" stroke-width="2" stroke-linecap="butt"/>
<polyline points="2068.50,162.30 2074.10,156.60 2079.80,162.30" fill="none" stroke="#1e4d9c" stroke-width="2" stroke-linecap="butt" stroke-linejoin="miter" />
<path d="M2129.3,148.2 A12.2,12.2 0 1 1 2118.2,156.8" fill="none" stroke="#1e4d9c" stroke-width="2.8" />
<path d="M2113.0,155.6 L2119.9,151.3 L2120.2,159.2 Z" fill="#1e4d9c" stroke="#1e4d9c" stroke-width="1" />
<polyline points="2150.20,156.80 2156.10,162.60 2162.00,156.80" fill="none" stroke="#222" stroke-width="2.2" stroke-linecap="butt" stroke-linejoin="miter" />
<polyline points="2268.80,210.60 2279.00,220.40 2289.20,210.60" fill="none" stroke="#333" stroke-width="1.6" stroke-linecap="butt" stroke-linejoin="miter" />
<path d="M1041.9,52.0 V21.3 H1072.1 V29.0" fill="none" stroke="#333" stroke-width="1.7" />
<line x1="1041.90" y1="52.00" x2="1051.30" y2="52.00" stroke="#333" stroke-width="1.7" stroke-linecap="butt"/>
<line x1="1057.10" y1="21.30" x2="1057.10" y2="36.60" stroke="#333" stroke-width="1.7" stroke-linecap="butt"/>
<path d="M1055.3,52.2 L1055.6,45.9 L1067.2,34.3 Q1070.2,31.5 1072.9,34.1 Q1075.3,36.9 1072.6,39.8 L1061.2,51.2 Z" fill="#fff" stroke="#1a4a94" stroke-width="2.4" stroke-linejoin="round"/>
<line x1="1064.00" y1="37.60" x2="1069.60" y2="43.20" stroke="#1a4a94" stroke-width="2.2" stroke-linecap="butt"/>
<polyline points="1253.80,33.00 1259.80,40.00 1265.80,33.00" fill="none" stroke="#222" stroke-width="2.2" stroke-linecap="butt" stroke-linejoin="miter" />
<polyline points="1037.00,101.40 1043.40,108.40 1049.80,101.40" fill="none" stroke="#222" stroke-width="2.2" stroke-linecap="butt" stroke-linejoin="miter" />
<line x1="1689.20" y1="30.10" x2="1705.10" y2="30.10" stroke="#7b9cc8" stroke-width="1.5" stroke-linecap="butt"/>
<line x1="1697.10" y1="22.30" x2="1697.10" y2="37.80" stroke="#7b9cc8" stroke-width="1.5" stroke-linecap="butt"/>
<polyline points="1708.40,25.30 1718.50,25.30 1718.50,45.60 1700.50,45.60 1696.40,52.20 1692.40,45.60 1687.70,45.60 1687.70,38.20" fill="none" stroke="#8a8a8a" stroke-width="1.6" stroke-linecap="butt" stroke-linejoin="miter" />
<polyline points="1847.40,34.20 1853.30,41.20 1859.20,34.20" fill="none" stroke="#222" stroke-width="2.2" stroke-linecap="butt" stroke-linejoin="miter" />
<circle cx="1946.3" cy="37.1" r="13.3" fill="none" stroke="#222" stroke-width="1.6"/>
<circle cx="1946.1" cy="34.3" r="4.4" fill="none" stroke="#222" stroke-width="1.6"/>
<path d="M1939.6,43.7 Q1942.0,38.9 1946.1,38.9 Q1950.2,38.9 1952.5,43.7" fill="none" stroke="#222" stroke-width="1.6" />
<rect x="2169.00" y="238.60" width="31.10" height="31.00" rx="0" fill="none" stroke="#3a3a3a" stroke-width="2.6"/>
<line x1="2175.90" y1="246.70" x2="2193.50" y2="246.70" stroke="#2a5a9a" stroke-width="2" stroke-linecap="butt"/>
<line x1="2175.90" y1="253.80" x2="2193.50" y2="253.80" stroke="#2a5a9a" stroke-width="2" stroke-linecap="butt"/>
<line x1="2175.90" y1="261.00" x2="2193.50" y2="261.00" stroke="#2a5a9a" stroke-width="2" stroke-linecap="butt"/>
<rect x="2231.80" y="238.60" width="31.10" height="31.00" rx="0" fill="none" stroke="#3a3a3a" stroke-width="2.6"/>
<line x1="2236.10" y1="246.70" x2="2245.20" y2="246.70" stroke="#2a5a9a" stroke-width="2" stroke-linecap="butt"/>
<line x1="2249.10" y1="246.70" x2="2258.90" y2="246.70" stroke="#2a5a9a" stroke-width="2" stroke-linecap="butt"/>
<line x1="2236.10" y1="253.80" x2="2245.20" y2="253.80" stroke="#2a5a9a" stroke-width="2" stroke-linecap="butt"/>
<line x1="2249.10" y1="253.80" x2="2258.90" y2="253.80" stroke="#2a5a9a" stroke-width="2" stroke-linecap="butt"/>
<line x1="2236.10" y1="261.00" x2="2245.20" y2="261.00" stroke="#2a5a9a" stroke-width="2" stroke-linecap="butt"/>
<line x1="2249.10" y1="261.00" x2="2258.90" y2="261.00" stroke="#2a5a9a" stroke-width="2" stroke-linecap="butt"/>
<path d="M79.2,1253.8 V1247.9 Q79.2,1247.2 80.0,1247.2 H92.9 Q93.6,1247.2 93.6,1247.9 V1260.1 Q93.6,1260.8 92.9,1260.8 H89.4" fill="none" stroke="#444" stroke-width="1.5" />
<rect x="74.20" y="1254.60" width="14.40" height="12.70" rx="1" fill="#fff" stroke="#444" stroke-width="1.5"/>
<line x1="76.50" y1="1264.20" x2="86.50" y2="1264.20" stroke="#2e5a9a" stroke-width="1.5" stroke-linecap="butt"/>
<line x1="137.80" y1="1259.90" x2="159.50" y2="1259.90" stroke="#333" stroke-width="1.5" stroke-linecap="butt"/>
<line x1="148.70" y1="1249.20" x2="148.70" y2="1270.70" stroke="#333" stroke-width="1.5" stroke-linecap="butt"/>
</g>
<g id="text">
<text x="25.32" y="49.40" font-family='"Liberation Sans",sans-serif' font-size="29.94" stroke="#222" stroke-width="0.55" textLength="74.22" lengthAdjust="spacingAndGlyphs" fill="#222">Home</text>
<text x="134.73" y="49.60" font-family='"Liberation Sans",sans-serif' font-size="30.96" textLength="72.28" lengthAdjust="spacingAndGlyphs" fill="#2b2b2b">Insert</text>
<text x="243.15" y="49.60" font-family='"Liberation Sans",sans-serif' font-size="30.96" textLength="85.22" lengthAdjust="spacingAndGlyphs" fill="#2b2b2b">Design</text>
<text x="363.30" y="49.60" font-family='"Liberation Sans",sans-serif' font-size="30.96" textLength="84.51" lengthAdjust="spacingAndGlyphs" fill="#2b2b2b">Export</text>
<text x="1081.58" y="44.80" font-family='"Liberation Sans",sans-serif' font-size="22.24" textLength="163.97" lengthAdjust="spacingAndGlyphs" fill="#2b2b2b">Manage Columns</text>
<text x="1744.13" y="45.30" font-family='"Liberation Sans",sans-serif' font-size="23.26" textLength="101.63" lengthAdjust="spacingAndGlyphs" fill="#2b2b2b">Comments</text>
<text x="1963.87" y="45.10" font-family='"Liberation Sans",sans-serif' font-size="22.97" stroke="#1f4e9b" stroke-width="0.5" textLength="62.87" lengthAdjust="spacingAndGlyphs" fill="#1f4e9b">Sign in</text>
<text x="22.36" y="144.20" font-family='"Liberation Sans",sans-serif' font-size="22.67" textLength="63.70" lengthAdjust="spacingAndGlyphs" fill="#2b2b2b">Layout</text>
<text x="123.68" y="112.30" font-family='"Liberation Sans",sans-serif' font-size="22.67" textLength="128.37" lengthAdjust="spacingAndGlyphs" fill="#2b2b2b">Inforiver Sans</text>
<text x="372.38" y="112.40" font-family='"Liberation Sans",sans-serif' font-size="22.53" textLength="25.05" lengthAdjust="spacingAndGlyphs" fill="#2b2b2b">12</text>
<text x="799.95" y="110.60" font-family='"Liberation Sans",sans-serif' font-size="22.09" textLength="24.09" lengthAdjust="spacingAndGlyphs" fill="#2b2b2b">18</text>
<text x="905.30" y="112.00" font-family='"Liberation Sans",sans-serif' font-size="22.24" textLength="126.25" lengthAdjust="spacingAndGlyphs" fill="#2b2b2b">Quick Format</text>
<text x="281.10" y="213.00" font-family='"Liberation Sans",sans-serif' font-size="19.77" textLength="43.98" lengthAdjust="spacingAndGlyphs" fill="#2b2b2b">Style</text>
<text x="713.66" y="213.20" font-family='"Liberation Sans",sans-serif' font-size="19.77" textLength="44.33" lengthAdjust="spacingAndGlyphs" fill="#2b2b2b">Align</text>
<text x="942.89" y="212.90" font-family='"Liberation Sans",sans-serif' font-size="18.90" textLength="69.73" lengthAdjust="spacingAndGlyphs" fill="#2b2b2b">Number</text>
<text x="1165.39" y="212.90" font-family='"Liberation Sans",sans-serif' font-size="18.90" textLength="48.55" lengthAdjust="spacingAndGlyphs" fill="#2b2b2b">Chart</text>
<text x="1318.19" y="144.00" font-family='"Liberation Sans",sans-serif' font-size="22.53" textLength="109.78" lengthAdjust="spacingAndGlyphs" fill="#2b2b2b">Conditional</text>
<text x="1312.01" y="176.20" font-family='"Liberation Sans",sans-serif' font-size="22.09" textLength="104.40" lengthAdjust="spacingAndGlyphs" fill="#2b2b2b">Formatting</text>
<text x="1445.14" y="144.00" font-family='"Liberation Sans",sans-serif' font-size="22.53" textLength="55.19" lengthAdjust="spacingAndGlyphs" fill="#2b2b2b">Totals</text>
<text x="1511.55" y="144.00" font-family='"Liberation Sans",sans-serif' font-size="22.53" textLength="51.46" lengthAdjust="spacingAndGlyphs" fill="#2b2b2b">Top n</text>
<text x="1575.92" y="144.00" font-family='"Liberation Sans",sans-serif' font-size="22.53" textLength="80.84" lengthAdjust="spacingAndGlyphs" fill="#2b2b2b">Explorer</text>
<text x="1479.76" y="212.80" font-family='"Liberation Sans",sans-serif' font-size="20.20" textLength="67.68" lengthAdjust="spacingAndGlyphs" fill="#2b2b2b">Analyze</text>
<text x="1754.27" y="141.80" font-family='"Liberation Sans",sans-serif' font-size="21.66" textLength="54.99" lengthAdjust="spacingAndGlyphs" fill="#2b2b2b">Notes</text>
<text x="1741.16" y="212.80" font-family='"Liberation Sans",sans-serif' font-size="20.20" textLength="79.22" lengthAdjust="spacingAndGlyphs" fill="#2b2b2b">Annotate</text>
<text x="1894.14" y="114.10" font-family='"Liberation Sans",sans-serif' font-size="22.82" textLength="96.31" lengthAdjust="spacingAndGlyphs" fill="#2b2b2b">Templates</text>
<text x="1893.49" y="169.80" font-family='"Liberation Sans",sans-serif' font-size="22.97" textLength="68.35" lengthAdjust="spacingAndGlyphs" fill="#2b2b2b">Display</text>
<text x="1972.26" y="216.00" font-family='"Liberation Sans",sans-serif' font-size="18.31" textLength="63.13" lengthAdjust="spacingAndGlyphs" fill="#2b2b2b">Actions</text>
<text x="28.55" y="261.90" font-family='"Liberation Sans",sans-serif' font-size="20.35" textLength="80.49" lengthAdjust="spacingAndGlyphs" fill="#222">Summary</text>
<text x="475.32" y="115.70" font-family='"Liberation Sans",sans-serif' font-size="43.90" textLength="25.95" lengthAdjust="spacingAndGlyphs" fill="#333">A</text>
<text x="526.74" y="115.70" font-family='"Liberation Sans",sans-serif' font-size="33.14" textLength="21.02" lengthAdjust="spacingAndGlyphs" fill="#333">A</text>
<text x="189.30" y="172.00" font-family='"Liberation Sans",sans-serif' font-size="30.96" font-weight="bold" textLength="17.29" lengthAdjust="spacingAndGlyphs" fill="#8a8a8a">B</text>
<text x="690.72" y="106.40" font-family='"Liberation Sans",sans-serif' font-size="24.80" stroke="#2a2a2a" stroke-width="0.6" textLength="28.25" lengthAdjust="spacingAndGlyphs" fill="#2a2a2a">ab</text>
<text x="895.63" y="173.20" font-family='"Liberation Sans",sans-serif' font-size="33.43" textLength="26.74" lengthAdjust="spacingAndGlyphs" fill="#8a8a8a">%</text>
<text x="936.75" y="172.80" font-family='"Liberation Sans",sans-serif' font-size="33.43" textLength="13.13" lengthAdjust="spacingAndGlyphs" fill="#8a8a8a">$</text>
<text x="952.78" y="172.80" font-family='"Liberation Sans",sans-serif' font-size="33.43" textLength="15.41" lengthAdjust="spacingAndGlyphs" fill="#8a8a8a">€</text>
<text x="976.50" y="174.30" font-family='"Liberation Sans",sans-serif' font-size="28.92" textLength="23.71" lengthAdjust="spacingAndGlyphs" fill="#333">.0</text>
<text x="1019.97" y="174.30" font-family='"Liberation Sans",sans-serif' font-size="28.92" textLength="23.11" lengthAdjust="spacingAndGlyphs" fill="#333">.0</text>
<text x="1235.50" y="166.30" font-family='"Liberation Sans",sans-serif' font-size="22.24" textLength="29.26" lengthAdjust="spacingAndGlyphs" fill="#2b2b2b">1.2</text>
<text x="1375.32" y="102.60" font-family='"Liberation Sans",sans-serif' font-size="20.49" font-weight="bold" textLength="11.75" lengthAdjust="spacingAndGlyphs" fill="#fff">3</text>
<text x="62.43" y="329.80" font-family='"Liberation Sans",sans-serif' font-size="21.80" textLength="85.71" lengthAdjust="spacingAndGlyphs" fill="#858585">Category</text>
<text x="62.11" y="371.50" font-family='"Liberation Sans",sans-serif' font-size="30.96" textLength="127.35" lengthAdjust="spacingAndGlyphs" fill="#333">Beverages</text>
<text x="614.21" y="329.80" font-family='"Liberation Mono",monospace' font-size="22.77" textLength="47.49" lengthAdjust="spacingAndGlyphs" fill="#858585">2022</text>
<text x="668.06" y="329.80" font-family='"Liberation Sans",sans-serif' font-size="21.80" textLength="68.09" lengthAdjust="spacingAndGlyphs" fill="#858585">Actuals</text>
<text x="1166.81" y="329.80" font-family='"Liberation Mono",monospace' font-size="22.77" textLength="47.39" lengthAdjust="spacingAndGlyphs" fill="#858585">2022</text>
<text x="1219.11" y="329.80" font-family='"Liberation Sans",sans-serif' font-size="21.80" textLength="41.23" lengthAdjust="spacingAndGlyphs" fill="#858585">Plan</text>
<text x="1719.13" y="329.80" font-family='"Liberation Mono",monospace' font-size="22.77" textLength="46.92" lengthAdjust="spacingAndGlyphs" fill="#858585">2021</text>
<text x="1772.56" y="329.80" font-family='"Liberation Sans",sans-serif' font-size="21.80" textLength="68.50" lengthAdjust="spacingAndGlyphs" fill="#858585">Actuals</text>
<text x="613.88" y="371.50" font-family='"Liberation Mono",monospace' font-size="32.49" textLength="111.18" lengthAdjust="spacingAndGlyphs" fill="#333">845.31m</text>
<text x="1166.89" y="371.50" font-family='"Liberation Mono",monospace' font-size="32.49" textLength="110.46" lengthAdjust="spacingAndGlyphs" fill="#333">882.44m</text>
<text x="1719.10" y="371.50" font-family='"Liberation Mono",monospace' font-size="32.49" textLength="110.15" lengthAdjust="spacingAndGlyphs" fill="#333">801.90m</text>
<text x="62.43" y="438.10" font-family='"Liberation Sans",sans-serif' font-size="21.80" textLength="85.71" lengthAdjust="spacingAndGlyphs" fill="#858585">Category</text>
<text x="63.38" y="479.80" font-family='"Liberation Sans",sans-serif' font-size="30.96" textLength="73.48" lengthAdjust="spacingAndGlyphs" fill="#333">Water</text>
<text x="614.21" y="438.10" font-family='"Liberation Mono",monospace' font-size="22.77" textLength="47.49" lengthAdjust="spacingAndGlyphs" fill="#858585">2022</text>
<text x="668.06" y="438.10" font-family='"Liberation Sans",sans-serif' font-size="21.80" textLength="68.09" lengthAdjust="spacingAndGlyphs" fill="#858585">Actuals</text>
<text x="1166.81" y="438.10" font-family='"Liberation Mono",monospace' font-size="22.77" textLength="47.39" lengthAdjust="spacingAndGlyphs" fill="#858585">2022</text>
<text x="1219.11" y="438.10" font-family='"Liberation Sans",sans-serif' font-size="21.80" textLength="41.23" lengthAdjust="spacingAndGlyphs" fill="#858585">Plan</text>
<text x="1719.13" y="438.10" font-family='"Liberation Mono",monospace' font-size="22.77" textLength="46.92" lengthAdjust="spacingAndGlyphs" fill="#858585">2021</text>
<text x="1772.56" y="438.10" font-family='"Liberation Sans",sans-serif' font-size="21.80" textLength="68.50" lengthAdjust="spacingAndGlyphs" fill="#858585">Actuals</text>
<text x="613.95" y="479.80" font-family='"Liberation Mono",monospace' font-size="32.49" textLength="111.11" lengthAdjust="spacingAndGlyphs" fill="#333">312.06m</text>
<text x="1166.96" y="479.80" font-family='"Liberation Mono",monospace' font-size="32.49" textLength="110.39" lengthAdjust="spacingAndGlyphs" fill="#333">306.80m</text>
<text x="1718.95" y="479.80" font-family='"Liberation Mono",monospace' font-size="32.49" textLength="110.29" lengthAdjust="spacingAndGlyphs" fill="#333">299.44m</text>
</g>
</svg>
</body></html>
